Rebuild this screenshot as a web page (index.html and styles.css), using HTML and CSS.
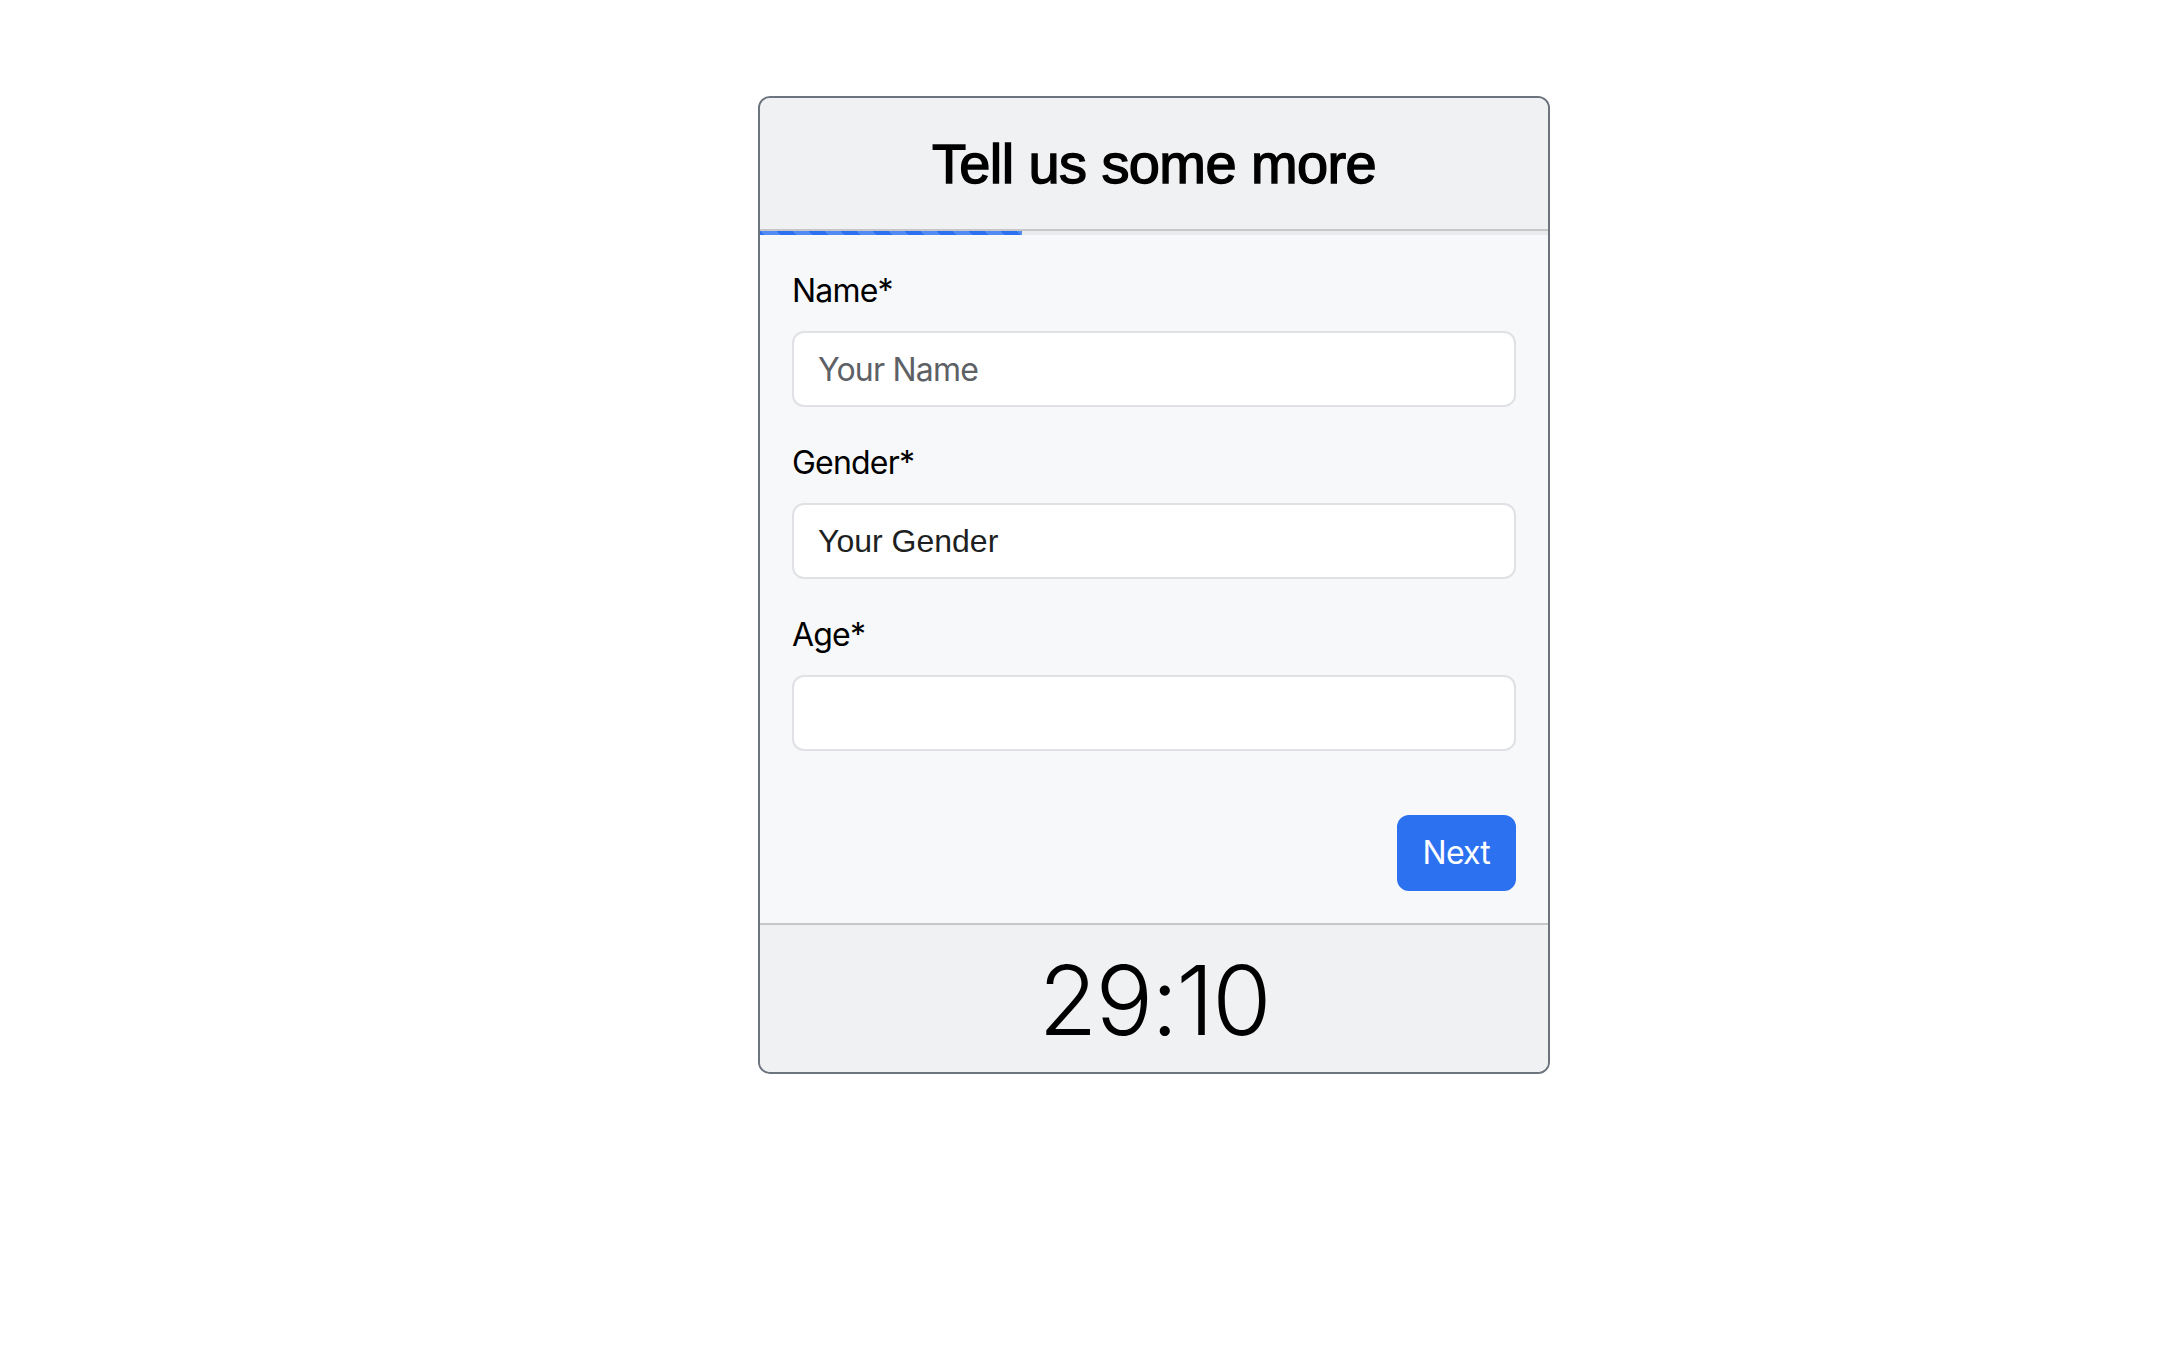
FILE: index.html
```html
<!DOCTYPE html>
<html lang="en">
<head>
<meta charset="utf-8">
<title>Tell us some more</title>
<link rel="stylesheet" href="styles.css">
</head>
<body>
<div class="page">
  <div class="card">
    <div class="card-header">
      <h3 class="title">Tell us some more</h3>
    </div>
    <div class="progress"><div class="progress-bar" style="width: 33.3%"></div></div>
    <form class="card-body">
      <div class="field">
        <label class="form-label" for="name">Name*</label>
        <input class="form-control" id="name" type="text" placeholder="Your Name">
      </div>
      <div class="field">
        <label class="form-label" for="gender">Gender*</label>
        <div class="form-control select" id="gender">Your Gender</div>
      </div>
      <div class="field">
        <label class="form-label" for="age">Age*</label>
        <input class="form-control" id="age" type="text">
      </div>
      <div class="actions">
        <button class="btn-primary" type="button">Next</button>
      </div>
    </form>
    <div class="card-footer">
      <div class="timer">29:10</div>
    </div>
  </div>
</div>
</body>
</html>
```

FILE: styles.css
```css
html, body {
  margin: 0;
  padding: 0;
  background: #ffffff;
}

body {
  font-family: Inter, "Noto Sans", "Liberation Sans", sans-serif;
  color: #000;
}

.page {
  padding: 96px 0 0 758px;
}

.card {
  box-sizing: border-box;
  width: 792px;
  border: 2px solid #6c747d;
  border-radius: 12px;
  overflow: hidden;
  background: #f7f8fa;
}

.card-header {
  background: #f0f1f3;
  border-bottom: 2px solid #c6c7c9;
  padding: 32px 32px 32px;
  text-align: center;
}

.title {
  margin: 0;
  font-family: "Liberation Sans", Arial, sans-serif;
  font-weight: 400;
  font-size: 56px;
  line-height: 67px;
  letter-spacing: -0.6px;
  -webkit-text-stroke: 1.4px #000;
  color: #000;
}

.progress {
  height: 4px;
  background: #e9ebee;
}

.progress-bar {
  height: 100%;
  background-color: #2c72f0;
  background-image: linear-gradient(45deg, rgba(255,255,255,.18) 25%, transparent 25%, transparent 50%, rgba(255,255,255,.18) 50%, rgba(255,255,255,.18) 75%, transparent 75%, transparent);
  background-size: 32px 32px;
}

.card-body {
  display: flex;
  flex-direction: column;
  gap: 32px;
  padding: 32px 32px 32px;
  margin: 0;
  background: #f7f8fa;
}

.field {
  display: flex;
  flex-direction: column;
}

.form-label {
  font-size: 32px;
  line-height: 48px;
  margin-bottom: 16px;
  letter-spacing: -0.8px;
  color: #000;
}

.form-control {
  box-sizing: border-box;
  width: 100%;
  height: 76px;
  padding: 12px 24px;
  font-family: Inter, "Noto Sans", sans-serif;
  font-size: 32px;
  line-height: 48px;
  letter-spacing: -0.8px;
  color: #212529;
  background: #fff;
  border: 2px solid #dfe1e5;
  border-radius: 12px;
  outline: none;
  margin: 0;
}

.form-control::placeholder {
  color: #5d6166;
  opacity: 1;
}

.select {
  font-family: "Liberation Sans", Arial, sans-serif;
  color: #1d1f22;
  letter-spacing: 0;
}

.actions {
  display: flex;
  justify-content: flex-end;
  padding-top: 32px;
}

.btn-primary {
  box-sizing: border-box;
  height: 76px;
  padding: 12px 24px;
  font-family: Inter, "Noto Sans", sans-serif;
  font-size: 32px;
  line-height: 48px;
  letter-spacing: -0.8px;
  color: #fff;
  background: #2c72f0;
  border: 2px solid #2c72f0;
  border-radius: 12px;
}

.card-footer {
  background: #f0f1f3;
  border-top: 2px solid #c6c7c9;
  padding: 18px 32px 14px;
  text-align: center;
}

.timer {
  font-size: 96px;
  line-height: 115px;
  font-weight: 300;
  letter-spacing: -2px;
  color: #000;
}
```
